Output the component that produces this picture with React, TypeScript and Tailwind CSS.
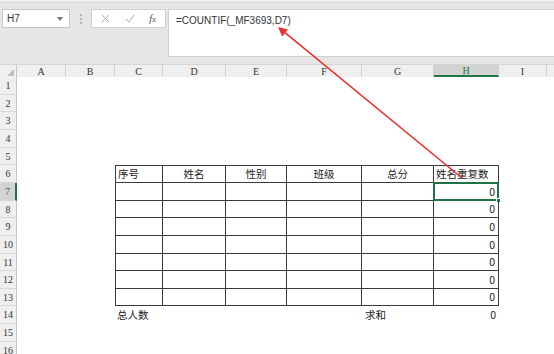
import React from 'react'

const cols = [
  { k: 'A', w: 'w-[49px]' },
  { k: 'B', w: 'w-[49px]' },
  { k: 'C', w: 'w-[48px]' },
  { k: 'D', w: 'w-[63px]' },
  { k: 'E', w: 'w-[61px]' },
  { k: 'F', w: 'w-[75px]' },
  { k: 'G', w: 'w-[72px]' },
  { k: 'H', w: 'w-[65px]' },
  { k: 'I', w: 'w-[48px]' },
  { k: 'J', w: 'w-[60px]' },
]

// row heights alternate 17/18px to land on the screenshot's lines
const rowH = ['h-[18px]', 'h-[17px]', 'h-[18px]', 'h-[18px]', 'h-[17px]', 'h-[18px]', 'h-[18px]', 'h-[17px]', 'h-[18px]', 'h-[18px]', 'h-[17px]', 'h-[18px]', 'h-[17px]', 'h-[18px]', 'h-[18px]', 'h-[17px]']

const header: Record<string, { text: string; align: string }> = {
  C: { text: '序号', align: 'justify-start pl-[2px]' },
  D: { text: '姓名', align: 'justify-center' },
  E: { text: '性别', align: 'justify-center' },
  F: { text: '班级', align: 'justify-center' },
  G: { text: '总分', align: 'justify-center' },
  H: { text: '姓名重复数', align: 'justify-start pl-[2px]' },
}

const tableCols = ['C', 'D', 'E', 'F', 'G', 'H']

function Cell({ row, col, w }: { row: number; col: string; w: string }) {
  const inTable = row >= 6 && row <= 13 && tableCols.includes(col)
  let border = ''
  if (inTable) {
    border = 'border-r border-b border-[#3a3a3a]'
    if (col === 'C') border += ' border-l'
    if (row === 6) border += ' border-t'
  }
  let content: React.ReactNode = null
  let align = 'justify-start'
  if (row === 6 && header[col]) {
    content = header[col].text
    align = header[col].align
  } else if (row >= 7 && row <= 13 && col === 'H') {
    content = '0'
    align = 'justify-end pr-[3px]'
  } else if (row === 14) {
    if (col === 'C') {
      content = '总人数'
      align = 'justify-start pl-[2px]'
    } else if (col === 'G') {
      content = '求和'
      align = 'justify-start pl-[3px]'
    } else if (col === 'H') {
      content = '0'
      align = 'justify-end pr-[3px]'
    }
  }
  return (
    <div className={`${w} shrink-0 h-full relative flex items-center whitespace-nowrap box-border ${border} ${align}`}>
      {content}
      {row === 7 && col === 'H' && (
        <>
          <div className="absolute -left-[1px] -top-[1px] -right-[1px] -bottom-[1px] border-2 border-[#217346]" />
          <div className="absolute -right-[3px] -bottom-[3px] w-[5px] h-[5px] bg-[#217346] border border-white" />
        </>
      )}
    </div>
  )
}

export default function App() {
  const rows = Array.from({ length: 16 }, (_, i) => i + 1)
  return (
    <div className="w-[554px] h-[354px] overflow-hidden relative bg-[#e6e6e6] font-['Liberation_Sans','Noto_Sans_CJK_SC',sans-serif]">
      {/* formula bar */}
      <div className="h-[3px] bg-[#efefef] border-b border-[#d6d6d6]" />
      <div className="h-[54px] flex items-start pt-[6px] pl-[2px]">
        <div className="w-[68px] h-[19px] bg-white border border-[#c6c6c6] flex items-center justify-between pl-[4px] pr-[6px] text-[10px] text-[#333]">
          <span>H7</span>
          <svg width="6" height="4" viewBox="0 0 6 4"><path d="M0 0h6L3 4z" fill="#777" /></svg>
        </div>
        <div className="w-[21px] h-[19px] flex flex-col items-center justify-center gap-[2px]">
          <span className="w-[2px] h-[2px] bg-[#b5b5b5]" />
          <span className="w-[2px] h-[2px] bg-[#b5b5b5]" />
          <span className="w-[2px] h-[2px] bg-[#b5b5b5]" />
        </div>
        <div className="w-[75px] h-[19px] bg-white border border-[#d0d0d0] flex items-center justify-around px-[2px]">
          <svg width="9" height="9" viewBox="0 0 9 9"><path d="M1 1l7 7M8 1L1 8" stroke="#a8a8a8" strokeWidth="1" /></svg>
          <svg width="10" height="9" viewBox="0 0 10 9"><path d="M1 5l3 3 5-7" stroke="#a8a8a8" strokeWidth="1" fill="none" /></svg>
          <span className="text-[10px] italic font-['Liberation_Serif',serif] text-[#444]">f<span className="text-[8px]">x</span></span>
        </div>
        <div className="ml-[2px] flex-1 h-[48px] bg-white border border-[#d0d0d0] border-r-0 pl-[7px] pt-[3px] text-[10px] text-[#333]">
          =COUNTIF(_MF3693,D7)
        </div>
      </div>
      <div className="h-[7px]" />

      {/* column headers */}
      <div className="h-[13px] flex bg-[#efefef] border-t border-[#d4d4d4] font-['Liberation_Serif',serif] text-[10px] text-[#333]">
        <div className="w-[17px] shrink-0 border-r border-[#c6c6c6] relative">
          <svg className="absolute right-[2px] bottom-[1px]" width="7" height="7" viewBox="0 0 7 7"><path d="M7 0v7H0z" fill="#bdbdbd" /></svg>
        </div>
        {cols.map((c) => (
          <div
            key={c.k}
            className={`${c.w} shrink-0 flex items-center justify-center border-r border-[#d0d0d0] ${c.k === 'H' ? 'bg-[#d3d3d3] text-[#217346] border-b-2 border-b-[#217346]' : ''}`}
          >
            {c.k === 'J' ? '' : c.k}
          </div>
        ))}
      </div>

      {/* sheet */}
      <div className="flex flex-col bg-white text-[10.5px] text-[#222] font-['Noto_Sans_CJK_SC','Liberation_Sans',sans-serif]">
        {rows.map((r, i) => (
          <div key={r} className={`${rowH[i]} flex shrink-0`}>
            <div
              className={`w-[17px] shrink-0 flex items-center justify-center border-b border-[#d8d8d8] font-['Liberation_Serif',serif] text-[10px] ${r === 7 ? 'bg-[#d3d3d3] text-[#217346] border-r-2 border-r-[#217346]' : 'bg-[#efefef] text-[#333] border-r border-r-[#c6c6c6]'}`}
            >
              {r}
            </div>
            {cols.map((c) => (
              <Cell key={c.k} row={r} col={c.k} w={c.w} />
            ))}
          </div>
        ))}
      </div>

      {/* red annotation arrow */}
      <svg className="absolute left-0 top-0 pointer-events-none" width="554" height="354" viewBox="0 0 554 354">
        <line x1="462" y1="178" x2="285" y2="32.7" stroke="#e8322e" strokeWidth="1.6" />
        <polygon points="278,27 288,29.4 282.2,36.5" fill="#e8322e" />
      </svg>
    </div>
  )
}
